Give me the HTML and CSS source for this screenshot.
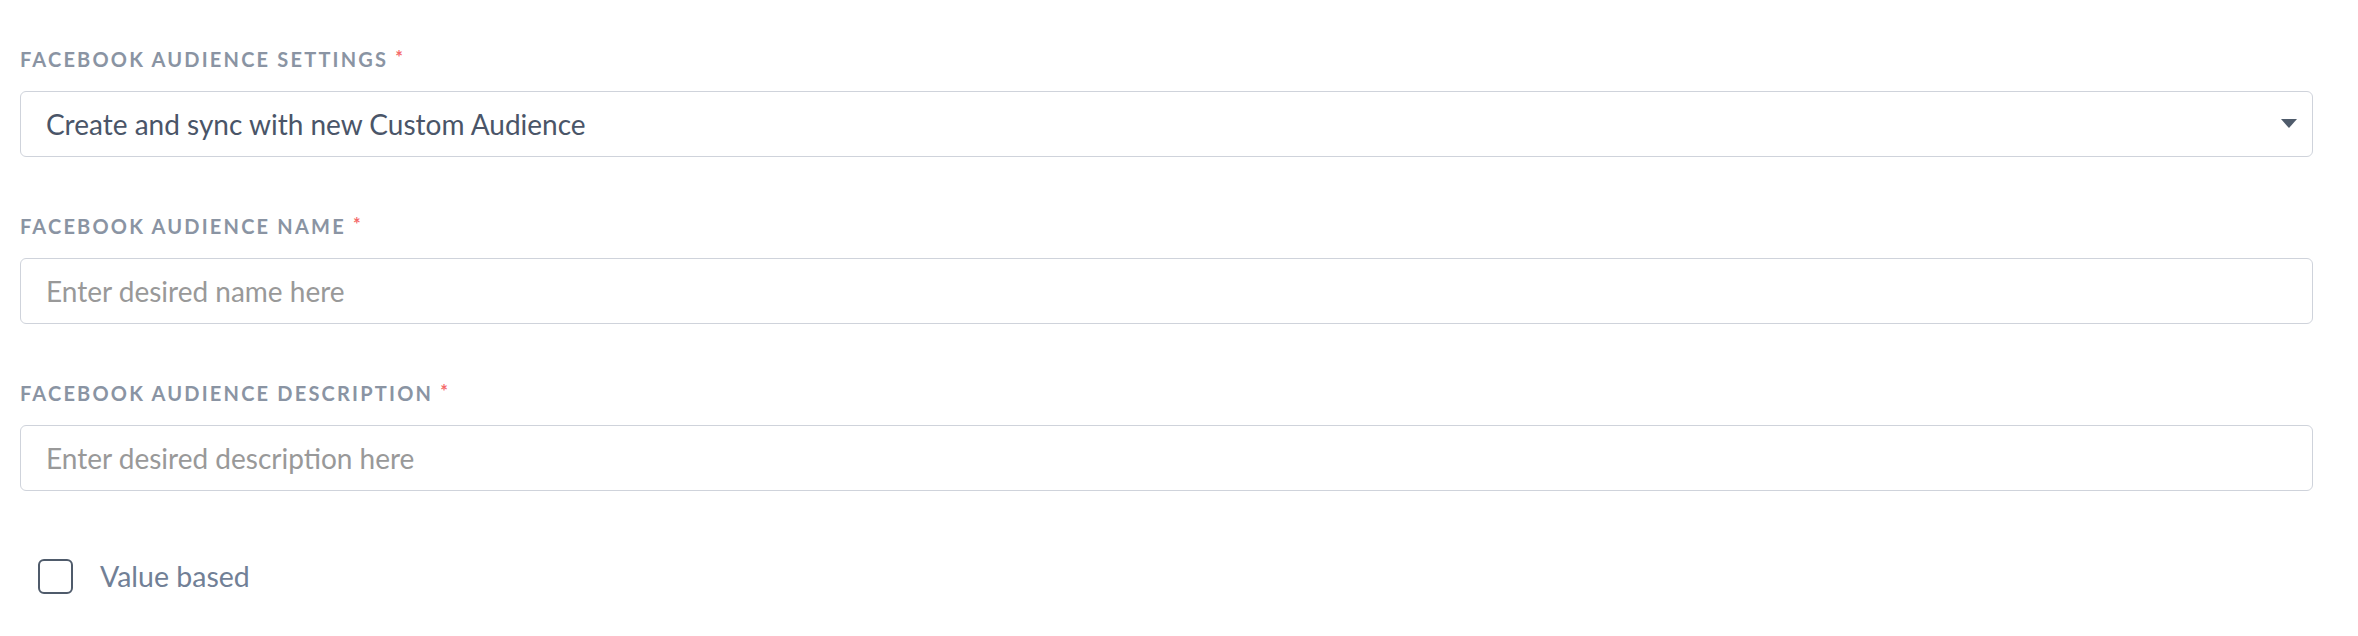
FILE: index.html
```html
<!DOCTYPE html>
<html lang="en">
<head>
<meta charset="utf-8">
<title>Facebook Audience</title>
<link rel="stylesheet" href="styles.css">
</head>
<body>
<form class="form">
  <div class="field">
    <div class="label">FACEBOOK AUDIENCE SETTINGS <span class="req">*</span></div>
    <div class="control select">
      <span class="value">Create and sync with new Custom Audience</span>
      <svg class="caret" width="16" height="9" viewBox="0 0 16 9"><path d="M0 0H16L8 9Z" fill="#4f5b6b"/></svg>
    </div>
  </div>
  <div class="field">
    <div class="label">FACEBOOK AUDIENCE NAME <span class="req">*</span></div>
    <input class="control input" type="text" placeholder="Enter desired name here">
  </div>
  <div class="field">
    <div class="label">FACEBOOK AUDIENCE DESCRIPTION <span class="req">*</span></div>
    <input class="control input" type="text" placeholder="Enter desired description here">
  </div>
  <label class="check">
    <span class="box"></span>
    <span class="check-text">Value based</span>
  </label>
</form>
</body>
</html>
```
FILE: styles.css
```css
html, body {
  margin: 0;
  padding: 0;
  background: #ffffff;
}
.form {
  display: flex;
  flex-direction: column;
  padding: 44px 45px 0 20px;
  font-family: Lato, "Liberation Sans", sans-serif;
}
.field {
  display: flex;
  flex-direction: column;
  margin-bottom: 54px;
}
.label {
  font-size: 20px;
  line-height: 30px;
  font-weight: 700;
  letter-spacing: 2.2px;
  color: #8a94a3;
  margin-bottom: 16.5px;
}
.req {
  color: #f46a6a;
  font-size: 18px;
  vertical-align: top;
  position: relative;
  top: -2px;
  letter-spacing: 0;
}
.control {
  box-sizing: border-box;
  height: 66.5px;
  width: 100%;
  border: 1.5px solid #cfd3db;
  border-radius: 6px;
  padding: 0 15px 0 25px;
  font-family: Lato, "Liberation Sans", sans-serif;
  font-size: 28px;
  color: #4a5568;
  background: #ffffff;
  margin: 0;
  outline: none;
}
.select {
  display: flex;
  align-items: center;
  justify-content: space-between;
}
.input::placeholder {
  color: #999999;
  opacity: 1;
}
.check {
  display: flex;
  align-items: center;
  gap: 27px;
  margin-top: 13.5px;
  padding-left: 18px;
}
.box {
  box-sizing: border-box;
  width: 35px;
  height: 35px;
  border: 2px solid #4f5b6b;
  border-radius: 6px;
}
.check-text {
  font-size: 28.5px;
  color: #718096;
}
```
